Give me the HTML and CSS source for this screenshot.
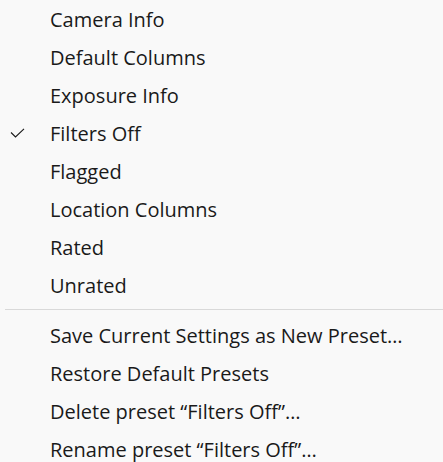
FILE: index.html
```html
<!DOCTYPE html>
<html>
<head>
<meta charset="utf-8">
<link rel="stylesheet" href="styles.css">
</head>
<body>
<div class="menu">
  <div class="item"><span class="check"></span><span class="label">Camera Info</span></div>
  <div class="item"><span class="check"></span><span class="label">Default Columns</span></div>
  <div class="item"><span class="check"></span><span class="label">Exposure Info</span></div>
  <div class="item"><span class="check"><svg width="16" height="12" viewBox="0 0 16 12"><polyline points="1,4.5 5.5,9 14,0.8" fill="none" stroke="#1a1a1a" stroke-width="1.1"/></svg></span><span class="label">Filters Off</span></div>
  <div class="item"><span class="check"></span><span class="label">Flagged</span></div>
  <div class="item"><span class="check"></span><span class="label">Location Columns</span></div>
  <div class="item"><span class="check"></span><span class="label">Rated</span></div>
  <div class="item"><span class="check"></span><span class="label">Unrated</span></div>
  <div class="sep"></div>
  <div class="item"><span class="check"></span><span class="label">Save Current Settings as New Preset…</span></div>
  <div class="item"><span class="check"></span><span class="label">Restore Default Presets</span></div>
  <div class="item"><span class="check"></span><span class="label">Delete preset “Filters Off”…</span></div>
  <div class="item"><span class="check"></span><span class="label">Rename preset “Filters Off”…</span></div>
</div>
</body>
</html>
```
FILE: styles.css
```css
html, body {
  margin: 0;
  padding: 0;
  background: #f9f9f9;
}
.menu {
  display: flex;
  flex-direction: column;
  width: 443px;
  font-family: "Open Sans", "Noto Sans", sans-serif;
  font-size: 20px;
  color: #1a1a1a;
}
.item {
  height: 38px;
  display: flex;
  align-items: center;
}
.check {
  width: 50px;
  padding-left: 10px;
  box-sizing: border-box;
  display: flex;
  align-items: center;
}
.check svg {
  display: block;
  margin-top: 2px;
}
.label {
  white-space: nowrap;
}
.sep {
  height: 1px;
  background: #d9d9d9;
  margin: 5px 0 6px 5px;
}
```
